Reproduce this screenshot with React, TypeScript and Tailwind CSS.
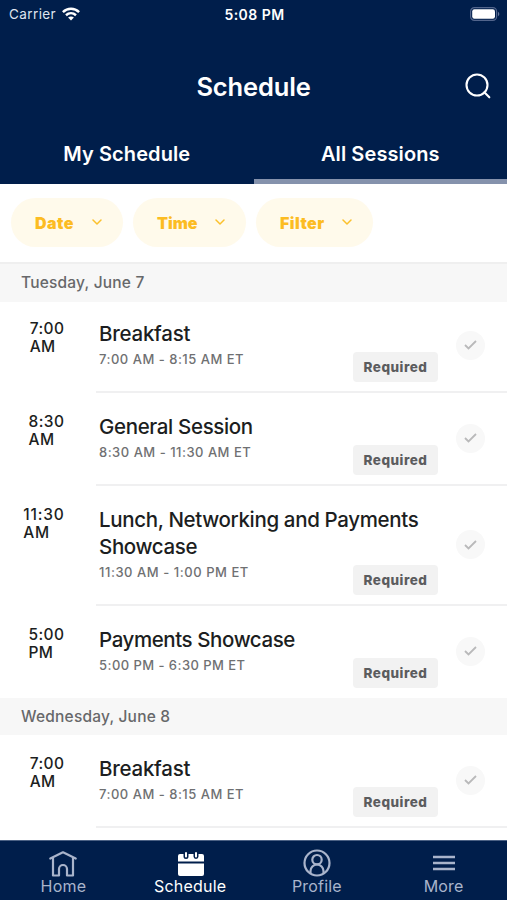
import React from "react";

type Session = {
  time: string;
  period: string;
  title: string[];
  range: string;
  first?: boolean;
  last?: boolean;
  height: string;
  timeSpacing: string;
  titleSpacing: string;
  rangeSpacing: string;
};

const tuesday: Session[] = [
  { time: "7:00", period: "AM", title: ["Breakfast"], range: "7:00 AM - 8:15 AM ET", first: true, height: "h-[91px]", timeSpacing: "tracking-[0.45px]", titleSpacing: "tracking-[-0.25px]", rangeSpacing: "tracking-[0.5px]" },
  { time: "8:30", period: "AM", title: ["General Session"], range: "8:30 AM - 11:30 AM ET", height: "h-[93px]", timeSpacing: "tracking-[0.45px]", titleSpacing: "tracking-[-0.35px]", rangeSpacing: "tracking-[0.5px]" },
  { time: "11:30", period: "AM", title: ["Lunch, Networking and Payments", "Showcase"], range: "11:30 AM - 1:00 PM ET", height: "h-[120px]", timeSpacing: "tracking-[0.8px]", titleSpacing: "tracking-[-0.35px]", rangeSpacing: "tracking-[0.55px]" },
  { time: "5:00", period: "PM", title: ["Payments Showcase"], range: "5:00 PM - 6:30 PM ET", last: true, height: "h-[92px]", timeSpacing: "tracking-[0.45px]", titleSpacing: "tracking-[-0.42px]", rangeSpacing: "tracking-[0.45px]" },
];

const wednesday: Session[] = [
  { time: "7:00", period: "AM", title: ["Breakfast"], range: "7:00 AM - 8:15 AM ET", height: "h-[93px]", timeSpacing: "tracking-[0.45px]", titleSpacing: "tracking-[-0.25px]", rangeSpacing: "tracking-[0.5px]" },
];

function WifiIcon() {
  return (
    <svg width="18" height="14" viewBox="0 0 18 14" fill="none" stroke="#fff" strokeWidth="2.5" className="-mt-[2px]">
      <path d="M.9 5.1C5.500.7 12.500.7 17.100 5.100" />
      <path d="M4 8.200c2.900-2.600 7.100-2.600 10 0" />
      <path d="M6.100 10.500c1.700-1.500 4.100-1.500 5.800 0L9 13.400z" fill="#fff" stroke="none" />
    </svg>
  );
}

function BatteryIcon() {
  return (
    <svg width="30" height="14" viewBox="0 0 30 14">
      <rect x=".6" y=".6" width="26" height="12.8" rx="3.8" fill="none" stroke="#52658c" strokeWidth="1.2" />
      <rect x="2.2" y="2.2" width="22.8" height="9.6" rx="2.2" fill="#fff" />
      <path d="M28 4.800c1.800.7 1.800 3.700 0 4.400z" fill="#66779b" />
    </svg>
  );
}

function Pill({ label, width, gap, spacing }: { label: string; width: string; gap: string; spacing: string }) {
  return (
    <button className={`flex h-[49px] items-center rounded-full bg-[#fffaeb] pl-6 text-[16px] font-black text-[#fcbc22] ${width} ${gap} ${spacing}`}>
      {label}
      <svg width="10" height="6" viewBox="0 0 10 6" fill="none" stroke="#fbc02d" strokeWidth="1.5" strokeLinecap="round" strokeLinejoin="round" className="-mt-px">
        <path d="m1 1 4 4 4-4" />
      </svg>
    </button>
  );
}

function DayHeader({ label, height }: { label: string; height: string }) {
  return (
    <div className={`flex shrink-0 items-center bg-[#f7f7f7] pl-[21px] text-[15.5px] font-medium tracking-[0.2px] text-[#67686a] ${height}`}>
      {label}
    </div>
  );
}

function Row({ s }: { s: Session }) {
  return (
    <div className={`flex shrink-0 ${s.height}`}>
      <div className={`flex w-[64.5px] shrink-0 justify-end ${s.first ? "pt-[18px]" : "pt-[20px]"}`}>
        <div className={`whitespace-nowrap text-[15.5px] font-medium leading-[18px] text-[#1c1e21] ${s.timeSpacing}`}>
          {s.time}
          <br />
          {s.period}
        </div>
      </div>
      <div className={`ml-[31.5px] flex min-w-0 flex-1 ${s.last ? "" : "border-b-2 border-[#f0f0f1]"}`}>
        <div className={`flex w-[342px] shrink-0 flex-col pl-[3px] ${s.first ? "pt-[18px]" : "pt-[20px]"}`}>
          <div className={`whitespace-nowrap text-[20.5px] font-[450] leading-[27px] text-[#1c1e21] ${s.titleSpacing}`}>
            {s.title.map((line) => (
              <div key={line}>{line}</div>
            ))}
          </div>
          <div className="flex justify-between">
            <div className={`mt-[3px] whitespace-nowrap text-[13px] font-medium leading-[18px] text-[#6f7072] ${s.rangeSpacing}`}>{s.range}</div>
            <div className="mt-[5px] flex h-[30px] w-[85px] shrink-0 items-center justify-center rounded-[4px] bg-[#f2f2f2] text-[13.5px] font-extrabold tracking-[0.5px] text-[#5b5c5e]">
              Required
            </div>
          </div>
        </div>
        <div className={`ml-[18px] flex items-center ${s.first ? "pb-[3px]" : s.last ? "pb-[2px]" : "pb-[1px]"}`}>
          <div className="flex size-[29px] items-center justify-center rounded-full bg-[#f8f8f8]">
            <svg width="13" height="10" viewBox="0 0 13 10" fill="none" stroke="#b9b9ba" strokeWidth="1.8">
              <path d="m1 5 3.500 3.500L12 1" />
            </svg>
          </div>
        </div>
      </div>
    </div>
  );
}

function Tab({ label, active, children }: { label: string; active?: boolean; children: React.ReactNode }) {
  return (
    <div className={`flex flex-1 flex-col items-center pt-[8px] text-[16px] leading-[18px] tracking-[0.2px] ${active ? "text-white" : "text-[#a9b4cb]"}`}>
      <div className="flex h-[28px] items-center justify-center">{children}</div>
      {label}
    </div>
  );
}

export default function App() {
  return (
    <div className="flex h-[900px] w-[507px] flex-col overflow-hidden bg-white font-[Inter,'Liberation_Sans',sans-serif]">
      <header className="flex h-[184px] shrink-0 flex-col bg-[#001e4b] text-white">
        <div className="grid h-[28px] grid-cols-3 items-center pl-[9px] pr-[7px] pt-px text-[13.5px]">
          <div className="flex items-center gap-[6px] tracking-[0.4px] text-[#dfe4ee]">
            Carrier <WifiIcon />
          </div>
          <div className="text-center text-[14px] font-semibold tracking-[0.45px]">5:08 PM</div>
          <div className="flex justify-end pb-[2px]"><BatteryIcon /></div>
        </div>
        <div className="grid h-[102px] shrink-0 grid-cols-[1fr_auto_1fr] items-center pt-[14px]">
          <div />
          <h1 className="pt-px text-[25.5px] font-semibold leading-8 tracking-[-0.15px]">Schedule</h1>
          <div className="flex justify-end pr-[16px]">
            <svg width="26" height="26" viewBox="0 0 26 26" fill="none" stroke="#fff" strokeWidth="2.1" strokeLinecap="round">
              <circle cx="12" cy="12" r="10.500" />
              <path d="m19.300 19.300 5 5" />
            </svg>
          </div>
        </div>
        <div className="grid min-h-0 flex-1 grid-cols-2 overflow-hidden text-center text-[20px] font-semibold leading-[48px] tracking-[0.1px]">
          <div>My Schedule</div>
          <div className="border-b-[5px] border-[#8592ac]">All Sessions</div>
        </div>
      </header>

      <div className="flex h-[78px] shrink-0 items-start pl-[11px] pt-[14px]">
        <Pill label="Date" width="w-[112px]" gap="gap-[18px]" spacing="tracking-[0.5px]" />
        <div className="w-[10px]" />
        <Pill label="Time" width="w-[113px]" gap="gap-[17px]" spacing="tracking-[0px]" />
        <div className="w-[10px]" />
        <Pill label="Filter" width="w-[117px]" gap="gap-[17px]" spacing="tracking-[0.45px]" />
      </div>

      <main className="flex min-h-0 flex-1 flex-col overflow-hidden">
        <div className="h-[2px] shrink-0 bg-[#efefef]" />
        <DayHeader label="Tuesday, June 7" height="h-[38px]" />
        {tuesday.map((s) => <Row key={s.time} s={s} />)}
        <DayHeader label="Wednesday, June 8" height="h-[37px]" />
        {wednesday.map((s) => <Row key={s.time} s={s} />)}
      </main>

      <nav className="flex h-[60px] shrink-0 border-t border-[#4b6184] bg-[#001e4b]">
        <Tab label="Home">
          <svg width="28" height="26" viewBox="0 0 28 26" fill="none" stroke="currentColor" strokeWidth="2.200" strokeLinejoin="round" strokeLinecap="round" className="mt-[2px]">
            <path d="M1.300 7.600 14 1.300l12.700 6.300M4 6.800v17.700h6V18a4 4 0 0 1 8 0v6.500h6V6.800" />
          </svg>
        </Tab>
        <Tab label="Schedule" active>
          <svg width="26" height="26" viewBox="0 0 26 26" fill="currentColor" className="ml-[2px] mt-[1px]">
            <path d="M2 3h3.500v2.500a2.500 2.500 0 0 0 5 0V3h5v2.500a2.500 2.500 0 0 0 5 0V3H24a2 2 0 0 1 2 2v5.500H0V5a2 2 0 0 1 2-2z" />
            <rect x="7" y="1" width="2" height="5.500" rx="1" />
            <rect x="17" y="1" width="2" height="5.500" rx="1" />
            <path d="M0 12.500h26V23a2 2 0 0 1-2 2H2a2 2 0 0 1-2-2z" />
          </svg>
        </Tab>
        <Tab label="Profile">
          <svg width="28" height="28" viewBox="0 0 28 28" fill="none" stroke="currentColor" strokeWidth="2.200">
            <circle cx="14" cy="14" r="12.500" />
            <circle cx="14" cy="10.700" r="4.700" />
            <path d="M7.500 24v-2a6.500 6.500 0 0 1 13 0v2" />
          </svg>
        </Tab>
        <Tab label="More">
          <svg width="22" height="16" viewBox="0 0 22 16" fill="none" stroke="currentColor" strokeWidth="2.400">
            <path d="M0 2h22M0 8h22M0 14h22" />
          </svg>
        </Tab>
      </nav>
    </div>
  );
}
